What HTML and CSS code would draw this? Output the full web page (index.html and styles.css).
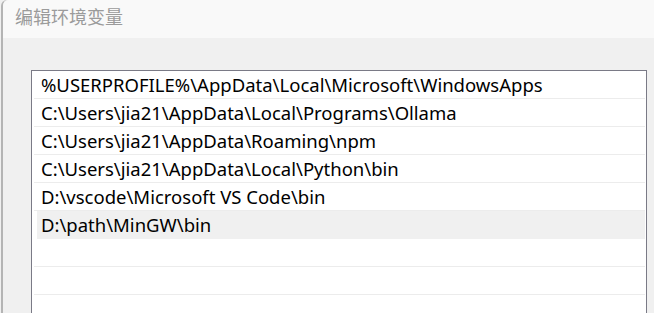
FILE: index.html
```html
<!DOCTYPE html>
<html lang="zh-CN">
<head>
    <meta charset="UTF-8">
    <meta name="viewport" content="width=device-width, initial-scale=1.0">
    <title>编辑环境变量</title>
    <link rel="stylesheet" href="styles.css">
</head>
<body>
    <div class="window">
        <div class="title-bar">
            <span class="title">编辑环境变量</span>
        </div>
        <div class="content">
            <div class="path-list">
                <div class="path-row">%USERPROFILE%\AppData\Local\Microsoft\WindowsApps</div>
                <div class="path-row">C:\Users\jia21\AppData\Local\Programs\Ollama</div>
                <div class="path-row">C:\Users\jia21\AppData\Roaming\npm</div>
                <div class="path-row">C:\Users\jia21\AppData\Local\Python\bin</div>
                <div class="path-row">D:\vscode\Microsoft VS Code\bin</div>
                <div class="path-row selected">D:\path\MinGW\bin</div>
                <div class="path-row"></div>
                <div class="path-row"></div>
                <div class="path-row"></div>
            </div>
        </div>
    </div>
</body>
</html>
```

FILE: styles.css
```css
body {
    margin: 0;
    background-color: #f0f0f0;
    font-family: "Noto Sans", "Noto Sans CJK SC", sans-serif;
    overflow: hidden;
}

.window {
    height: 313px;
    margin-left: 1px;
    border-left: 2px solid #b4b4b4;
    border-top-left-radius: 6px;
    background-color: #f0f0f0;
}

.title-bar {
    height: 38px;
    padding-left: 12px;
    background-color: #f9f9f9;
    border-top-left-radius: 6px;
    display: flex;
    align-items: center;
}

.title {
    font-family: "Noto Sans CJK SC", sans-serif;
    font-size: 18px;
    color: #9b9b9b;
    margin-top: -6px;
}

.content {
    padding: 32px 7px 0 28px;
}

.path-list {
    height: 243px;
    overflow: hidden;
    background-color: #ffffff;
    border: 1px solid #7a7a86;
    border-bottom: none;
    padding: 0 1px 0 1px;
}

.path-row {
    height: 27px;
    margin-left: 1px;
    border-bottom: 1px solid #ececec;
    padding-left: 7px;
    font-size: 18.5px;
    line-height: 27px;
    color: #000000;
    white-space: nowrap;
}

.path-row.selected {
    background-color: #f0f0f0;
    margin-left: 4px;
    padding-left: 4px;
    border-bottom-color: #f0f0f0;
}
```
